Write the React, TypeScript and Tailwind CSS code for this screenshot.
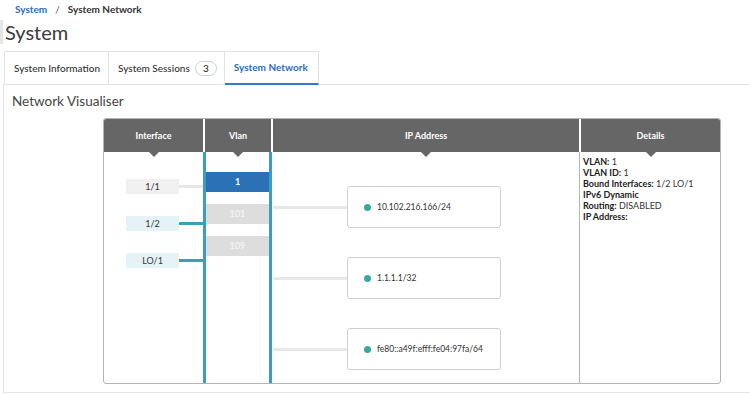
const ifaces = [
  { name: "1/1", bound: false },
  { name: "1/2", bound: true },
  { name: "LO/1", bound: true },
];

const vlans = [
  { id: "1", active: true },
  { id: "101", active: false },
  { id: "109", active: false },
];

const ips = ["10.102.216.166/24", "1.1.1.1/32", "fe80::a49f:efff:fe04:97fa/64"];

function HeadCell({ label, className }: { label: string; className?: string }) {
  return (
    <div
      className={`relative flex h-[33px] items-center justify-center bg-[#666666] text-[9px] font-bold text-white ${className ?? ""}`}
    >
      {label}
      <span className="absolute left-1/2 top-full -translate-x-1/2 border-x-[5px] border-t-[5px] border-x-transparent border-t-[#666666]" />
    </div>
  );
}

export default function App() {
  return (
    <div className="h-[394px] w-[750px] overflow-hidden bg-white font-['Lato',sans-serif] text-[#333]">
      <div className="flex h-[18px] items-center gap-[8px] pl-[15px] text-[10px] font-bold leading-[18px]">
        <span className="text-[#2b6cb8]">System</span>
        <span className="font-normal text-[#555]">/</span>
        <span className="text-[#333]">System Network</span>
      </div>

      <h1 className="mt-[2px] h-[24px] border-l-[3px] border-[#e6e6e6] pl-[2px] text-[20px] leading-[24px] text-[#3a3a3a]">
        System
      </h1>

      <div className="ml-[4px] mt-[7px] flex h-[34px] border-b border-[#e3e3e3] text-[10px] font-medium">
        <div className="flex items-center border-x border-t border-[#e3e3e3] px-[8px] pl-[9px] text-[#333]">
          System Information
        </div>
        <div className="flex items-center gap-[5px] border-r border-t border-[#e3e3e3] pl-[9px] pr-[7px] text-[#333]">
          System Sessions
          <span className="flex h-[15px] w-[22px] items-center justify-center rounded-full border border-[#cfcfcf] text-[10px]">
            3
          </span>
        </div>
        <div className="-mb-px flex items-center border-b-2 border-r border-t border-[#e3e3e3] border-b-[#2f7bd0] pl-[9px] pr-[10px] font-bold text-[#2b6cb8]">
          System Network
        </div>
      </div>

      <div className="ml-[3px] h-[308px] border-b border-l border-[#e6e6e6] pl-[8px]">
        <div className="flex h-[33px] items-center text-[13.5px] text-[#444]">Network Visualiser</div>

        <div className="ml-[91px] flex h-[266px] w-[618px] overflow-hidden rounded-[3px] border border-[#b4b4b4]">
          {/* Interface */}
          <div className="flex w-[99px] flex-col">
            <HeadCell label="Interface" />
            <div className="flex flex-1 flex-col gap-[22px] pt-[27px]">
              {ifaces.map((f) => (
                <div key={f.name} className="flex h-[15px] items-center pl-[22px]">
                  <div
                    className={`flex h-[15px] w-[53px] items-center justify-center text-[9px] ${
                      f.bound ? "bg-[#e5f3f8]" : "bg-[#f0f0f0]"
                    }`}
                  >
                    {f.name}
                  </div>
                  <div className={`h-[3px] flex-1 ${f.bound ? "bg-[#3a9ec0]" : "bg-[#e6e6e6]"}`} />
                </div>
              ))}
            </div>
          </div>

          {/* Vlan */}
          <div className="flex w-[70px] flex-col">
            <HeadCell label="Vlan" className="mx-[2px]" />
            <div className="mr-px flex flex-1 flex-col gap-[12px] border-x-[3px] border-[#3a9ec0] pt-[20px]">
              {vlans.map((v) => (
                <div
                  key={v.id}
                  className={`flex h-[20px] items-center justify-center text-[9px] font-bold ${
                    v.active ? "bg-[#2a72b5] text-white" : "bg-[#dddddd] text-[#f4f4f4]"
                  }`}
                >
                  {v.id}
                </div>
              ))}
            </div>
          </div>

          {/* IP Address */}
          <div className="flex w-[306px] flex-col">
            <HeadCell label="IP Address" />
            <div className="flex flex-1 flex-col gap-[29px] pt-[34px]">
              {ips.map((ip) => (
                <div key={ip} className="flex h-[42px] items-center">
                  <div className="h-[3px] w-[74px] bg-[#e8e8e8]" />
                  <div className="flex h-[42px] w-[154px] items-center gap-[6px] rounded-[3px] border border-[#d0d0d0] pl-[16px] text-[8.5px] text-[#333]">
                    <span className="h-[7px] w-[7px] rounded-full bg-[#3aa89a]" />
                    {ip}
                  </div>
                </div>
              ))}
            </div>
          </div>

          {/* Details */}
          <div className="flex w-[141px] flex-col">
            <HeadCell label="Details" className="ml-[2px]" />
            <div className="flex-1 border-l border-[#b4b4b4] pl-[3px] pt-[4px] text-[9px] leading-[11px] text-[#333]">
              <div>
                <b className="text-[#222]">VLAN:</b> 1
              </div>
              <div>
                <b className="text-[#222]">VLAN ID:</b> 1
              </div>
              <div>
                <b className="text-[#222]">Bound Interfaces:</b> 1/2 LO/1
              </div>
              <div>
                <b className="text-[#222]">IPv6 Dynamic</b>
              </div>
              <div>
                <b className="text-[#222]">Routing:</b> DISABLED
              </div>
              <div>
                <b className="text-[#222]">IP Address:</b>
              </div>
            </div>
          </div>
        </div>
      </div>
    </div>
  );
}
